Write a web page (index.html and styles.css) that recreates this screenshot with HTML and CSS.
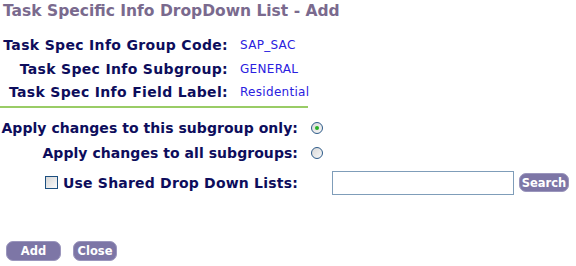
FILE: index.html
```html
<!DOCTYPE html>
<html lang="en">
<head>
	<meta charset="UTF-8">
	<title>Task Specific Info DropDown List - Add</title>
	<link rel="stylesheet" href="styles.css">
</head>
<body>
	<div id="page">
		<div id="pagetitle">Task Specific Info DropDown List - Add</div>
		<div id="infogrid">
			<div class="infolabel">Task Spec Info Group Code:</div>
			<div class="infovalue">SAP_SAC</div>
			<div class="infolabel">Task Spec Info Subgroup:</div>
			<div class="infovalue">GENERAL</div>
			<div class="infolabel">Task Spec Info Field Label:</div>
			<div class="infovalue">Residential</div>
		</div>
		<div id="optiongrid">
			<div class="optlabel">Apply changes to this subgroup only:</div>
			<div class="optcontrol"><input type="radio" name="applyto" class="radio" checked></div>
			<div class="optlabel">Apply changes to all subgroups:</div>
			<div class="optcontrol"><input type="radio" name="applyto" class="radio"></div>
			<div class="optlabel sharedlabel"><input type="checkbox" class="check" id="useshared"><label for="useshared">Use Shared Drop Down Lists:</label></div>
			<div class="optcontrol">
				<input type="text" id="searchbox">
				<div class="btn" id="searchbtn">Search</div>
			</div>
		</div>
		<div id="actions">
			<div class="btn" id="addbtn">Add</div>
			<div class="btn" id="closebtn">Close</div>
		</div>
	</div>
</body>
</html>
```
FILE: styles.css
```css
*{
	font-family: "DejaVu Sans", Verdana, sans-serif;
	box-sizing: border-box;
}
body{
	margin: 0;
	background: #fff;
}
#page{
	width: 576px;
	height: 266px;
	padding: 2px 0 0 0;
	overflow: hidden;
}
#pagetitle{
	color: #7a6a8e;
	font-weight: bold;
	font-size: 15.5px;
	line-height: 18px;
	padding-left: 3px;
	white-space: nowrap;
}
#infogrid{
	display: grid;
	grid-template-columns: 228px 80px;
	column-gap: 12px;
	width: 308px;
	margin-top: 14px;
	border-bottom: 2px solid #99cc66;
	padding-bottom: 1px;
}
.infolabel{
	text-align: right;
	color: #0d0d5c;
	font-weight: bold;
	font-size: 14px;
	letter-spacing: 0.33px;
	line-height: 23.5px;
	white-space: nowrap;
}
.infovalue{
	color: #2a20e0;
	font-size: 12px;
	letter-spacing: 0.3px;
	line-height: 23.5px;
	white-space: nowrap;
}
#optiongrid{
	display: grid;
	grid-template-columns: 298px auto;
	grid-template-rows: 25px 25px 34px;
	margin-top: 8px;
	align-items: center;
}
.optlabel{
	text-align: right;
	color: #0d0d5c;
	font-weight: bold;
	font-size: 14px;
	letter-spacing: 0.05px;
	white-space: nowrap;
	display: flex;
	justify-content: flex-end;
	align-items: center;
}
.sharedlabel{
	letter-spacing: 0.2px;
}
.optcontrol{
	display: flex;
	align-items: center;
}
.radio{
	appearance: none;
	-webkit-appearance: none;
	width: 12px;
	height: 12px;
	margin: 0 0 0 13px;
	border: 1px solid #2d5a88;
	border-radius: 50%;
	background: linear-gradient(135deg, #d8d8d8, #f8f8f8);
	position: relative;
}
.radio:checked::after{
	content: "";
	position: absolute;
	left: 3px;
	top: 3px;
	width: 4px;
	height: 4px;
	border-radius: 50%;
	background: #26b026;
}
.check{
	appearance: none;
	-webkit-appearance: none;
	width: 13px;
	height: 13px;
	margin: 0 5px 0 0;
	border: 1px solid #1c4f80;
	background: linear-gradient(135deg, #d6d6d6, #fafafa);
}
#searchbox{
	width: 182px;
	height: 24px;
	margin: 0 0 0 34px;
	border: 1px solid #7f9db9;
	padding: 0;
}
#searchbtn{
	margin-left: 5px;
	width: 50px;
	height: 19px;
}
.btn{
	background: #7d76a6;
	color: #fff;
	font-weight: bold;
	font-size: 11.5px;
	border-radius: 7px;
	display: flex;
	align-items: center;
	justify-content: center;
	border: 1px solid #9b96bd;
}
#actions{
	display: flex;
	gap: 12px;
	padding-left: 6px;
	margin-top: 41px;
}
#addbtn{
	width: 55px;
	height: 20px;
}
#closebtn{
	width: 44px;
	height: 20px;
}
```
